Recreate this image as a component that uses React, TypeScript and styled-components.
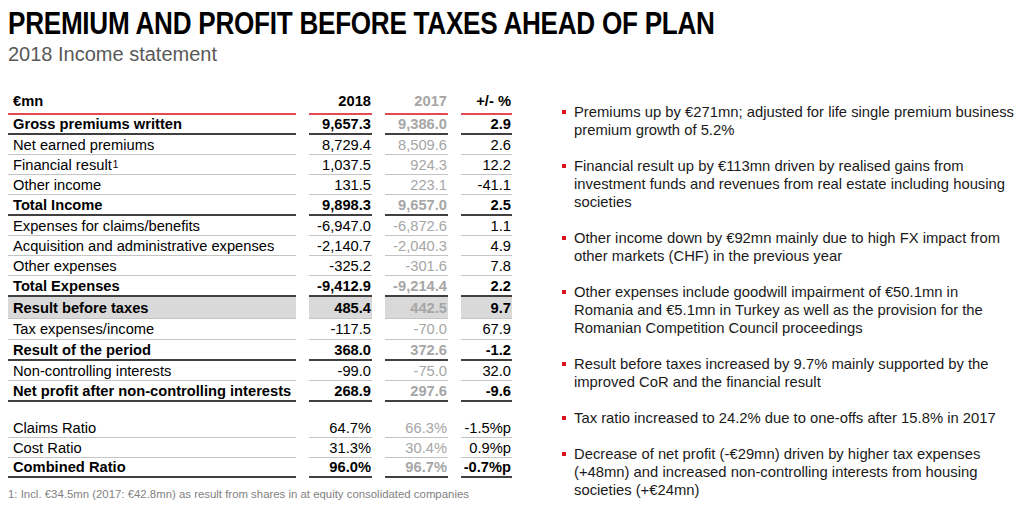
import React from "react";
import styled, { createGlobalStyle, css } from "styled-components";

const GlobalStyle = createGlobalStyle`
  html, body { margin: 0; padding: 0; background: #fff; }
  body { font-family: "Liberation Sans", Arial, sans-serif; color: #000; }
`;

const Page = styled.div`
  width: 1024px;
  height: 505px;
  box-sizing: border-box;
  padding: 4px 8px 0 8px;
  overflow: hidden;
`;

const Title = styled.h1`
  margin: 0;
  font-family: "Liberation Sans", Arial, sans-serif;
  font-weight: 700;
  font-size: 32px;
  line-height: 38px;
  letter-spacing: -0.3px;
  color: #000;
  white-space: nowrap;
  transform: scaleX(0.815);
  transform-origin: left center;
`;

const Subtitle = styled.div`
  font-size: 20px;
  line-height: 24px;
  color: #595959;
  margin-top: 0;
`;

const Main = styled.div`
  display: flex;
  align-items: flex-start;
  margin-top: 24px;
`;

const TableWrap = styled.div`
  width: 505px;
  flex: none;
`;

const Row = styled.div<{ $gapTop?: number }>`
  display: grid;
  grid-template-columns: 288px 63px 63px 51px;
  column-gap: 13px;
  ${(p) => p.$gapTop && css`margin-top: ${p.$gapTop}px;`}
`;

type Kind = "head" | "normal" | "bold";

const Cell = styled.div<{ $kind: Kind; $label?: boolean; $prev?: boolean; $shade?: boolean; $strong?: boolean; $h?: number }>`
  box-sizing: border-box;
  height: ${(p) => p.$h ?? 20}px;
  display: flex;
  align-items: center;
  justify-content: ${(p) => (p.$label ? "flex-start" : "flex-end")};
  padding: ${(p) => (p.$label ? "0 0 0 5px" : "0 1px 0 0")};
  font-size: 14.7px;
  white-space: nowrap;
  font-weight: ${(p) => (p.$strong ? 700 : 400)};
  color: ${(p) => (p.$prev ? "#a6a6a6" : "#000")};
  background: ${(p) => (p.$shade ? "#d9d9d9" : "transparent")};
  border-bottom: ${(p) =>
    p.$kind === "head"
      ? "2px solid #e34b50"
      : p.$kind === "bold"
      ? "2px solid #404040"
      : "1px solid #c4c4c4"};
  ${(p) => p.$kind === "head" && css`align-items: flex-end; padding-bottom: 4px;`}
`;

const Sup = styled.sup`
  font-size: 10px;
  line-height: 0;
  vertical-align: 5px;
  margin-left: 1px;
`;

const Footnote = styled.div`
  margin-top: 10px;
  font-size: 11.4px;
  color: #7f7f7f;
  white-space: nowrap;
`;

const Bullets = styled.ul`
  list-style: none;
  margin: 13px 0 0 41px;
  padding: 0 0 0 20px;
  width: 450px;
`;

const Bullet = styled.li`
  position: relative;
  font-size: 14.8px;
  line-height: 18px;
  color: #1a1a1a;
  margin-bottom: 18px;
  &::before {
    content: "";
    position: absolute;
    left: -12px;
    top: 7px;
    width: 4px;
    height: 4px;
    background: #d9141c;
  }
`;

type R = {
  label: React.ReactNode;
  a: string;
  b: string;
  c: string;
  kind: Kind;
  shade?: boolean;
  h?: number;
  gap?: number;
};

const rows: R[] = [
  { label: "€mn", a: "2018", b: "2017", c: "+/- %", kind: "head", h: 25 },
  { label: "Gross premiums written", a: "9,657.3", b: "9,386.0", c: "2.9", kind: "bold" },
  { label: "Net earned premiums", a: "8,729.4", b: "8,509.6", c: "2.6", kind: "normal" },
  { label: <>Financial result<Sup>1</Sup></>, a: "1,037.5", b: "924.3", c: "12.2", kind: "normal" },
  { label: "Other income", a: "131.5", b: "223.1", c: "-41.1", kind: "normal" },
  { label: "Total Income", a: "9,898.3", b: "9,657.0", c: "2.5", kind: "bold", h: 21 },
  { label: "Expenses for claims/benefits", a: "-6,947.0", b: "-6,872.6", c: "1.1", kind: "normal" },
  { label: "Acquisition and administrative expenses", a: "-2,140.7", b: "-2,040.3", c: "4.9", kind: "normal" },
  { label: "Other expenses", a: "-325.2", b: "-301.6", c: "7.8", kind: "normal" },
  { label: "Total Expenses", a: "-9,412.9", b: "-9,214.4", c: "2.2", kind: "bold", h: 21 },
  { label: "Result before taxes", a: "485.4", b: "442.5", c: "9.7", kind: "normal", shade: true, h: 22 },
  { label: "Tax expenses/income", a: "-117.5", b: "-70.0", c: "67.9", kind: "normal", h: 21 },
  { label: "Result of the period", a: "368.0", b: "372.6", c: "-1.2", kind: "bold", h: 21 },
  { label: "Non-controlling interests", a: "-99.0", b: "-75.0", c: "32.0", kind: "normal", h: 20 },
  { label: "Net profit after non-controlling interests", a: "268.9", b: "297.6", c: "-9.6", kind: "bold", h: 21 },
  { label: "Claims Ratio", a: "64.7%", b: "66.3%", c: "-1.5%p", kind: "normal", gap: 16 },
  { label: "Cost Ratio", a: "31.3%", b: "30.4%", c: "0.9%p", kind: "normal" },
  { label: "Combined Ratio", a: "96.0%", b: "96.7%", c: "-0.7%p", kind: "bold" },
];

const bullets = [
  "Premiums up by €271mn; adjusted for life single premium business premium growth of 5.2%",
  "Financial result up by €113mn driven by realised gains from investment funds and revenues from real estate including housing societies",
  "Other income down by €92mn mainly due to high FX impact from other markets (CHF) in the previous year",
  "Other expenses include goodwill impairment of €50.1mn in Romania and €5.1mn in Turkey as well as the provision for the Romanian Competition Council proceedings",
  "Result before taxes increased by 9.7% mainly supported by the improved CoR and the financial result",
  "Tax ratio increased to 24.2% due to one-offs after 15.8% in 2017",
  "Decrease of net profit (-€29mn) driven by higher tax expenses (+48mn) and increased non-controlling interests from housing societies (+€24mn)",
];

export default function App() {
  return (
    <>
      <GlobalStyle />
      <Page>
        <Title>PREMIUM AND PROFIT BEFORE TAXES AHEAD OF PLAN</Title>
        <Subtitle>2018 Income statement</Subtitle>
        <Main>
          <TableWrap>
            {rows.map((r, i) => {
              const strong = r.kind !== "normal" || !!r.shade;
              return (
                <Row key={i} $gapTop={r.gap}>
                  <Cell $kind={r.kind} $label $shade={r.shade} $strong={strong} $h={r.h}>
                    {r.label}
                  </Cell>
                  <Cell $kind={r.kind} $shade={r.shade} $strong={strong} $h={r.h}>
                    {r.a}
                  </Cell>
                  <Cell $kind={r.kind} $prev $shade={r.shade} $strong={strong} $h={r.h}>
                    {r.b}
                  </Cell>
                  <Cell $kind={r.kind} $shade={r.shade} $strong={strong} $h={r.h}>
                    {r.c}
                  </Cell>
                </Row>
              );
            })}
            <Footnote>1: Incl. €34.5mn (2017: €42.8mn) as result from shares in at equity consolidated companies</Footnote>
          </TableWrap>
          <Bullets>
            {bullets.map((b, i) => (
              <Bullet key={i}>{b}</Bullet>
            ))}
          </Bullets>
        </Main>
      </Page>
    </>
  );
}
